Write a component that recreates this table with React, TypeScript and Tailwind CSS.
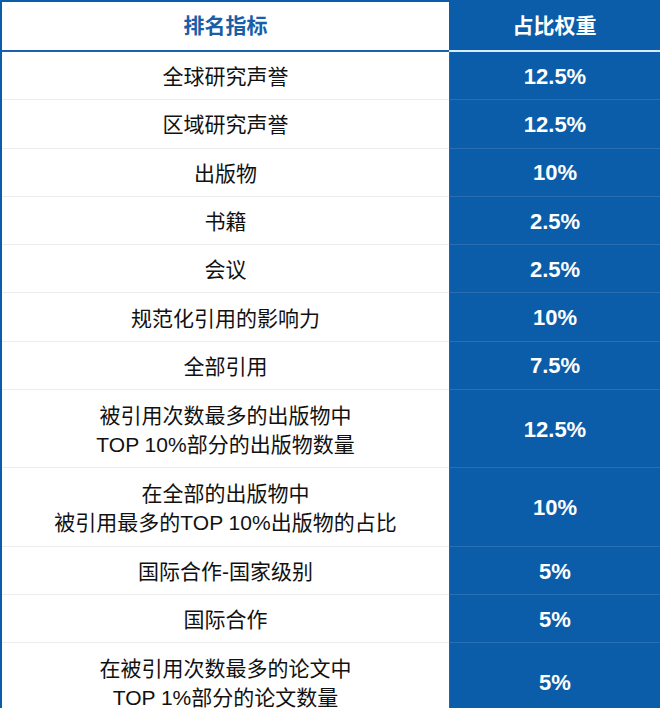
import React from "react";

type Row = { name: string[]; weight: string; h: string };

const rows: Row[] = [
  { name: ["全球研究声誉"], weight: "12.5%", h: "h-[48.3px]" },
  { name: ["区域研究声誉"], weight: "12.5%", h: "h-[48.3px]" },
  { name: ["出版物"], weight: "10%", h: "h-[48.3px]" },
  { name: ["书籍"], weight: "2.5%", h: "h-[48.3px]" },
  { name: ["会议"], weight: "2.5%", h: "h-[48.3px]" },
  { name: ["规范化引用的影响力"], weight: "10%", h: "h-[48.3px]" },
  { name: ["全部引用"], weight: "7.5%", h: "h-[48.3px]" },
  { name: ["被引用次数最多的出版物中", "TOP 10%部分的出版物数量"], weight: "12.5%", h: "h-[78px]" },
  { name: ["在全部的出版物中", "被引用最多的TOP 10%出版物的占比"], weight: "10%", h: "h-[79px]" },
  { name: ["国际合作-国家级别"], weight: "5%", h: "h-[48px]" },
  { name: ["国际合作"], weight: "5%", h: "h-[48px]" },
  { name: ["在被引用次数最多的论文中", "TOP 1%部分的论文数量"], weight: "5%", h: "h-[79px]" },
];

export default function App() {
  return (
    <div
      className="w-[660px] h-[708px] overflow-hidden bg-white"
      style={{ fontFamily: '"Liberation Sans", "Noto Sans CJK SC", sans-serif' }}
    >
      <div className="flex flex-col border-l-2 border-t-2 border-[#0c5da9]">
        <div className="flex h-[50px]">
          <div className="w-[447px] flex items-center justify-center border-b-2 border-[#1a62ad] text-[21px] font-bold text-[#1a5ea8]">
            排名指标
          </div>
          <div className="flex-1 flex items-center justify-center bg-[#0c5da9] border-b-2 border-[#d6ecfa] text-[21px] font-bold text-white">
            占比权重
          </div>
        </div>
        {rows.map((r, i) => (
          <div key={i} className={`flex ${r.h}`}>
            <div className="w-[447px] flex flex-col items-center justify-center pt-[2px] border-b border-[#ececec] text-[21px] leading-[29px] text-[#111]">
              {r.name.map((l, j) => (
                <div key={j}>{l}</div>
              ))}
            </div>
            <div className="flex-1 flex items-center justify-center pt-[1px] bg-[#0c5da9] border-b border-l border-[#2a6fb3] border-l-[#1c66ae] text-[22px] font-bold text-white">
              {r.weight}
            </div>
          </div>
        ))}
      </div>
    </div>
  );
}
